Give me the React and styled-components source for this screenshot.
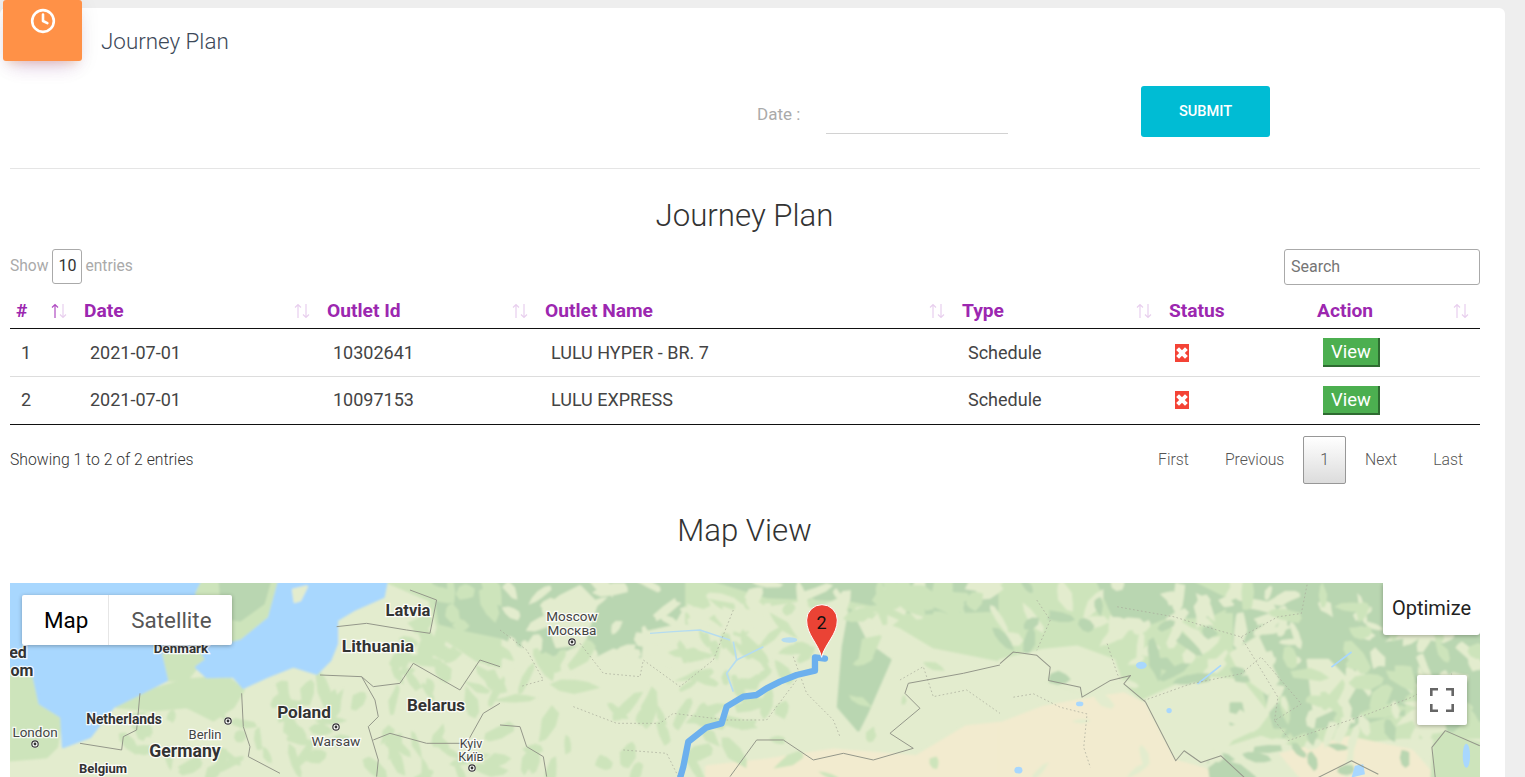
import React from "react";
import styled, { createGlobalStyle } from "styled-components";
import { Clock } from "lucide-react";

const Global = createGlobalStyle`
  html, body { margin: 0; padding: 0; height: 100%; overflow: hidden; background: #eeeeee; }
  body { font-family: Roboto, "Liberation Sans", sans-serif; color: #3c4858; }
  * { box-sizing: border-box; }
`;
const Card = styled.main`
  position: relative; width: 1505px; margin-top: 8px; padding: 0 25px 0 10px;
  background: #fff; border-radius: 6px 6px 0 0; height: 769px; overflow: visible;
`;
const IconBadge = styled.div`
  position: absolute; left: 3px; top: -8px; width: 79px; height: 61px; padding-top: 8px;
  display: flex; justify-content: center; align-items: flex-start; color: #fff;
  background: #ff9147; border-radius: 3px;
  box-shadow: 0 12px 20px -10px rgba(156,39,176,.28), 0 4px 20px 0 rgba(0,0,0,.08), 0 7px 8px -5px rgba(255,152,0,.2);
`;
const CardHeader = styled.h4`
  margin: 0; height: 66px; padding-left: 91px; font-size: 22.4px; line-height: 67px; font-weight: 300; color: #3c4858;
`;
const FilterRow = styled.form`
  display: flex; align-items: flex-start; height: 51px; margin-top: 12px; padding-left: 747px;
`;
const DateLabel = styled.label`
  width: 69px; font-size: 17px; line-height: 56px; color: #aaa; flex: none;
`;
const DateInput = styled.div`
  width: 182px; height: 48px; border-bottom: 1px solid #d2d2d2; flex: none;
`;
const SubmitButton = styled.button`
  width: 129px; margin-left: 133px; height: 51px; padding: 0 0 2px; border: 0; border-radius: 3px; flex: none;
  background: #00bcd4; color: #fff; font: 500 14.6px Roboto, sans-serif; text-transform: uppercase;
`;
const Divider = styled.hr`
  margin: 31px 0 0; border: 0; height: 1px; background: #e5e5e5;
`;
const Heading = styled.h2`
  margin: ${p => p.$top}px 0 0; padding-right: 1px; text-align: center; font-size: 31.2px; line-height: 40px; font-weight: 300; color: #333;
`;
const Tools = styled.div`
  display: flex; justify-content: space-between; align-items: flex-start; margin-top: 13px; height: 36px;
`;
const ShowLabel = styled.div`
  display: flex; align-items: flex-start; gap: 4px; font-size: 15.6px; color: #aaa; line-height: 34px;
`;
const LengthBox = styled.span`
  width: 30px; height: 35px; margin-right: -1px; padding-bottom: 2px; border: 1px solid #aaa; border-radius: 3px; color: #333; font-size: 16px;
  display: flex; align-items: center; justify-content: center;
`;
const SearchBox = styled.div`
  width: 196px; height: 36px; border: 1px solid #aaa; border-radius: 3px; padding-left: 6px;
  font-size: 16px; line-height: 34px; color: #757575;
`;
const Table = styled.table`
  width: 1470px; margin-top: 7px; border-collapse: collapse; table-layout: fixed;
`;
const HeadCell = styled.th`
  height: 36px; padding: 2px 0 0 6px; border-bottom: 1px solid #111; text-align: left;
  color: #9c27b0; font-size: 19.2px; font-weight: 700;
`;
const HeadInner = styled.div`
  display: flex; justify-content: space-between; align-items: center; padding-right: 10px;
`;
const Cell = styled.td`
  height: 48px; padding: 0 0 0 ${p => p.$pad || 12}px; border-bottom: 1px solid ${p => (p.$last ? "#111" : "#ddd")};
  font-size: 18px; color: #444; font-weight: 400;
`;
const CellText = styled.span`
  display: block; padding: ${p => (p.$first ? "1px 0 0" : "0 0 2px")};
`;
const StatusMark = styled.span`
  display: block; padding-top: ${p => (p.$first ? 2 : 0)}px;
`;
const ViewButton = styled.span`
  display: flex; align-items: center; justify-content: center; width: 57px; height: 29px; padding-left: 1px;
  background: #4caf50; color: #fff; font-size: 18.4px; border-right: 2px solid #2e6b31; border-bottom: 2px solid #2e6b31;
`;
const TableFooter = styled.div`
  display: flex; justify-content: space-between; align-items: center; margin-top: 11px; height: 48px;
`;
const Info = styled.div`
  font-size: 15.75px; font-weight: 300; color: #333;
`;
const Pager = styled.nav`
  display: flex; gap: 2px;
`;
const PageLink = styled.span`
  height: 48px; padding: 0 16px; border: 1px solid ${p => (p.$active ? "#979797" : "transparent")}; border-radius: 2px;
  font-size: 15.75px; font-weight: 300; line-height: 46px; color: #555;
  background: ${p => (p.$active ? "linear-gradient(to bottom,#fff 0%,#dcdcdc 100%)" : "none")};
`;
const MapBox = styled.section`
  position: relative; width: 1470px; height: 194px; margin-top: 32px; overflow: hidden; background: #e3ecce;
`;
const MapArt = styled.svg`
  display: block; width: 1470px; height: 194px;
`;
const MapType = styled.div`
  position: absolute; left: 12px; top: 12px; height: 50px; display: flex; background: #fff; border-radius: 2px;
  box-shadow: 0 1px 4px rgba(0,0,0,.3); font-size: 22.4px; line-height: 50px;
`;
const MapTypeOption = styled.span`
  padding: 0 ${p => p.$r}px 0 22px; color: ${p => (p.$on ? "#000" : "#565656")};
  border-right: ${p => (p.$on ? "1px solid #e6e6e6" : "0")};
`;
const OptimizeBtn = styled.div`
  position: absolute; right: 0; top: 0; width: 97px; height: 52px; background: #fff; border-radius: 0 0 3px 3px;
  box-shadow: 0 1px 4px rgba(0,0,0,.3); font-size: 20px; line-height: 50px; text-align: center; color: #222;
`;
const FullBtn = styled.div`
  position: absolute; left: 1407px; top: 92px; width: 50px; height: 50px; background: #fff; border-radius: 2px;
  box-shadow: 0 1px 4px rgba(0,0,0,.3); display: flex; align-items: center; justify-content: center;
`;

const Sort = ({ on }) => (
  <svg width="18" height="18" viewBox="0 0 18 18" fill="none" strokeWidth="1.2" aria-hidden="true">
    <path d="M5 16V2.5M2 5.5 5 2.5l3 3" stroke={on ? "#b04cc2" : "#e8cfee"} />
    <path d="M13 2v13.5M10 12.5l3 3 3-3" stroke="#e8cfee" />
  </svg>
);
const Cross = () => (
  <svg width="14" height="18" viewBox="0 0 14 18" aria-hidden="true" style={{ display: "block" }}>
    <rect width="14" height="18" fill="#f44336" />
    <path d="M2.6 4.6l8.8 8.8M11.4 4.6l-8.8 8.8" stroke="#fff" strokeWidth="4" />
  </svg>
);

const WATER = "#a8d7fe", MID = "#cde4bb", DARK = "#b9d6b1", SAND = "#f2ebcf", LIGHT = "#e3ecce";
const P = ({ f, d }) => <polygon fill={f} stroke={f} strokeWidth="9" strokeLinejoin="round" points={d} />;
const Line = ({ d, dash }) => (
  <polyline points={d} fill="none" stroke={dash ? "#a9ab9b" : "#94978a"} strokeWidth={dash ? 2.2 : 3}
    strokeDasharray={dash ? "5 7" : undefined} strokeLinejoin="round" />
);
const MapLabel = styled.text`
  font-family: Roboto, sans-serif; font-size: ${p => p.$s}px; font-weight: ${p => (p.$b ? 700 : 400)};
  fill: ${p => (p.$b ? "#333" : "#444")}; text-anchor: middle; paint-order: stroke; stroke: #fff; stroke-width: 2.6px; stroke-opacity: .85;
`;
const City = ({ x, y }) => (
  <g><circle cx={x} cy={y} r="4" fill="#fff" /><circle cx={x} cy={y} r="3.2" fill="none" stroke="#333" strokeWidth="1.2" /><circle cx={x} cy={y} r="1.4" fill="#333" /></g>
);

// Scattered vegetation fragments that give the map tile its mottled look: [x0, y0, x1, y1, colour, count, size] in page pixels.
const patchZones = [
  [395, 583, 500, 690, MID, 26, 14], [390, 670, 500, 777, MID, 20, 12], [245, 690, 400, 777, MID, 26, 13],
  [120, 690, 250, 777, MID, 20, 10], [500, 583, 680, 690, LIGHT, 32, 12], [500, 650, 800, 777, MID, 46, 13],
  [680, 600, 820, 690, MID, 26, 12], [690, 583, 1000, 625, LIGHT, 34, 12], [860, 583, 1000, 620, MID, 20, 14],
  [1000, 583, 1240, 665, LIGHT, 34, 13], [1000, 583, 1240, 680, DARK, 22, 12], [1240, 583, 1480, 700, LIGHT, 42, 12],
  [1240, 583, 1480, 720, MID, 36, 14], [1200, 700, 1480, 777, LIGHT, 24, 12], [1240, 720, 1480, 777, DARK, 12, 11],
  [830, 640, 1000, 777, MID, 8, 8], [1000, 680, 1150, 777, LIGHT, 6, 9],
];
function buildPatches() {
  let seed = 12345;
  const rnd = () => { seed = (seed * 16807) % 2147483647; return seed / 2147483647; };
  const out = [];
  patchZones.forEach(([x0, y0, x1, y1, f, n, s]) => {
    for (let i = 0; i < n; i++) {
      const cx = x0 + rnd() * (x1 - x0), cy = y0 + rnd() * (y1 - y0);
      const a = rnd() * Math.PI, long = s * (0.6 + rnd()), short = s * (0.25 + rnd() * 0.35);
      const pts = [];
      for (let k = 0; k < 8; k++) {
        const t = (k / 8) * Math.PI * 2, w = 0.7 + rnd() * 0.6;
        const px = Math.cos(t) * long * w, py = Math.sin(t) * short * w;
        pts.push(`${(cx + px * Math.cos(a) - py * Math.sin(a)).toFixed(1)},${(cy + px * Math.sin(a) + py * Math.cos(a)).toFixed(1)}`);
      }
      out.push({ f, d: pts.join(" ") });
    }
  });
  return out;
}
const patches = buildPatches();

const labels = [
  ["Latvia", 408, 616, 16.5, 1], ["Lithuania", 378, 652, 17.4, 1], ["Denmark", 181, 653, 13.4, 1],
  ["ed", 18, 658, 16, 1], ["om", 22, 676, 16, 1], ["Netherlands", 124, 724, 13.8, 1],
  ["Berlin", 205, 739, 13, 0], ["Germany", 185, 757, 17.6, 1], ["Poland", 304, 718, 17.2, 1],
  ["Warsaw", 336, 746, 13.7, 0], ["Belarus", 436, 711, 17, 1], ["Kyiv", 471, 748, 12.5, 0],
  ["Київ", 471, 761, 12.5, 0], ["London", 35, 737, 13.5, 0], ["Belgium", 103, 773, 13, 1],
  ["Moscow", 572, 621, 13.5, 0], ["Москва", 572, 635, 13.5, 0],
];

export default function App() {
  const rows = [[1, "10302641", "LULU HYPER - BR. 7"], [2, "10097153", "LULU EXPRESS"]];
  return (
    <>
      <Global />
      <Card>
        <IconBadge><Clock size={26} strokeWidth={2.4} /></IconBadge>
        <CardHeader>Journey Plan</CardHeader>
        <FilterRow>
          <DateLabel>Date :</DateLabel>
          <DateInput />
          <SubmitButton type="button">Submit</SubmitButton>
        </FilterRow>
        <Divider />
        <Heading $top={27}>Journey Plan</Heading>
        <Tools>
          <ShowLabel>Show <LengthBox>10</LengthBox> entries</ShowLabel>
          <SearchBox>Search</SearchBox>
        </Tools>
        <Table>
          <colgroup>
            {[68, 243, 218, 417, 207, 148, 169].map((w, i) => <col key={i} width={w} />)}
          </colgroup>
          <thead>
            <tr>
              <HeadCell><HeadInner>#<Sort on /></HeadInner></HeadCell>
              {["Date", "Outlet Id", "Outlet Name", "Type"].map(t => (
                <HeadCell key={t}><HeadInner>{t}<Sort /></HeadInner></HeadCell>
              ))}
              <HeadCell>Status</HeadCell>
              <HeadCell><HeadInner>Action<Sort /></HeadInner></HeadCell>
            </tr>
          </thead>
          <tbody>
            {rows.map(([n, id, name], i) => {
              const last = i === rows.length - 1;
              const first = i === 0;
              return (
                <tr key={n}>
                  <Cell $last={last} $pad={11}><CellText $first={first}>{n}</CellText></Cell>
                  <Cell $last={last}><CellText $first={first}>2021-07-01</CellText></Cell>
                  <Cell $last={last}><CellText $first={first}>{id}</CellText></Cell>
                  <Cell $last={last}><CellText $first={first}>{name}</CellText></Cell>
                  <Cell $last={last}><CellText $first={first}>Schedule</CellText></Cell>
                  <Cell $last={last}><StatusMark $first={first}><Cross /></StatusMark></Cell>
                  <Cell $last={last}><ViewButton>View</ViewButton></Cell>
                </tr>
              );
            })}
          </tbody>
        </Table>
        <TableFooter>
          <Info>Showing 1 to 2 of 2 entries</Info>
          <Pager>
            <PageLink>First</PageLink>
            <PageLink>Previous</PageLink>
            <PageLink $active>1</PageLink>
            <PageLink>Next</PageLink>
            <PageLink>Last</PageLink>
          </Pager>
        </TableFooter>
        <Heading $top={27}>Map View</Heading>
        <MapBox>
          <MapArt viewBox="10 583 1470 194" aria-label="Map">
            <defs><filter id="soft" x="-2%" y="-2%" width="104%" height="104%"><feGaussianBlur stdDeviation="0.9" /></filter></defs>
            <rect x="0" y="580" width="1525" height="200" fill={LIGHT} />
            <g filter="url(#soft)">
              <g transform="translate(0 580) scale(.3333)">
                <P f={MID} d="1150,0 1500,0 1500,260 1430,240 1310,160 1290,60" />
                <P f={DARK} d="1300,0 1500,0 1500,170 1400,150 1320,130" />
                <P f={LIGHT} d="1160,110 1290,90 1310,160 1210,250 1120,320 1085,290 1080,240 1010,190 1020,140" />
                <P f={MID} d="480,215 620,205 620,240 590,262 560,300 500,300" />
                <P f={MID} d="30,280 100,280 120,370 185,410 170,500 140,530 30,540" />
                <P f={MID} d="420,340 560,300 680,290 730,330 700,380 640,420 560,380 460,390 350,380" />
              </g>
              <g transform="translate(500 580) scale(.3333)">
                <P f={DARK} d="0,0 560,0 560,60 520,130 430,150 420,230 340,200 280,230 240,190 150,230 70,200 0,170" />
                <P f={MID} d="560,0 1500,0 1500,240 1300,200 1200,140 1050,90 900,60 700,90 560,130" />
                <P f={DARK} d="640,0 1500,0 1500,90 1250,100 1050,60 800,50" />
                <P f={LIGHT} d="130,90 180,50 240,20 290,70 250,190 170,200" />
                <P f={DARK} d="1050,90 1100,190 1170,240 1100,400 1075,450 1015,380 1030,200" />
                <P f={MID} d="1090,180 1140,170 1110,240 1080,240" />
                <P f={SAND} d="620,560 800,540 1000,510 1250,530 1400,440 1500,430 1500,590 620,590" />
              </g>
              <g transform="translate(1000 580) scale(.3348)">
                <P f={MID} d="0,0 1440,0 1440,470 1200,470 900,500 780,460 620,510 520,540 430,360 360,300 250,340 130,300 0,240" />
                <P f={DARK} d="290,0 560,0 700,70 620,110 500,110 420,140 340,110" />
                <P f={DARK} d="700,0 1440,0 1440,420 1180,400 1040,440 820,440 780,300 700,200" />
                <P f={LIGHT} d="0,240 130,210 230,200 340,240 360,300 250,340 130,300 0,300" />
                <P f={LIGHT} d="430,360 580,290 720,300 800,400 770,440 620,510 520,540" />
                <P f={DARK} d="690,370 720,370 730,420 690,430" />
                <P f={LIGHT} d="690,220 770,170 830,300 800,340 720,280" />
                <P f={LIGHT} d="920,240 980,240 1060,320 1030,370 940,410" />
                <P f={SAND} d="0,430 130,380 240,360 370,340 430,370 520,540 700,590 0,590" />
                <P f={SAND} d="840,520 1040,470 1230,510 1300,590 900,590" />
                <P f={DARK} d="620,510 680,525 760,590 630,590" />
                <P f={MID} d="1300,460 1440,490 1440,590 1290,590" />
              </g>
              {patches.map((b, i) => <polygon key={i} fill={b.f} points={b.d} />)}
              <g transform="translate(0 580) scale(.3333)">
                <P f={WATER} d="0,0 1160,0 1150,50 1060,90 1010,120 1010,190 990,240 950,280 880,258 800,290 730,322 700,288 620,290 590,262 620,240 600,205 480,215 500,300 420,340 340,380 270,470 190,500 185,410 120,370 100,280 30,280 0,260" />
                <P f={MID} d="610,0 830,0 800,110 720,175 660,190 600,120 590,40" />
                <P f={DARK} d="660,0 810,0 790,70 720,120 670,110" />
                <P f={LIGHT} d="880,30 920,20 900,60 885,65" />
              </g>
            </g>
            <g transform="translate(0 580) scale(.3333)">
              <Line d="1085,290 1125,360 1135,410 1105,440 1135,540 1130,590" />
              <Line d="960,285 1085,290 1120,320 1200,310 1240,250" />
              <Line d="1010,140 1100,130 1220,150 1290,160 1310,60 1230,30" />
              <Line d="1240,250 1380,330 1440,240 1500,260" />
              <Line d="1120,480 1170,460 1280,490 1400,490 1450,400 1500,370" />
              <Line d="725,340 730,440 750,500 745,530 840,580" />
              <Line d="420,340 410,450 370,470 365,510 240,490" />
            </g>
            <g transform="translate(500 580) scale(.3333)">
              <polyline points="700,185 710,240 680,280 700,335" fill="none" stroke="#b5dcf0" strokeWidth="5" />
              <polyline points="710,240 790,200" fill="none" stroke="#b5dcf0" strokeWidth="5" />
              <polyline points="450,160 520,155 600,150 690,180" fill="none" stroke="#b5dcf0" strokeWidth="4" />
              <ellipse cx="868" cy="180" rx="24" ry="8" fill="#b5dcf0" />
              <Line dash d="0,150 80,210 130,300 60,320" />
              <Line dash d="240,190 310,280 420,290 430,240 540,320 640,240 700,90" />
              <Line dash d="220,380 350,430 480,430 520,400 680,420 800,420 890,300" />
              <Line dash d="880,230 920,340 1000,420 1020,470" />
              <Line dash d="1200,300 1270,260 1300,350 1400,330 1500,400" />
              <Line dash d="370,510 500,520 540,600" />
              <Line d="0,435 60,440 80,500 130,530 140,590" />
              <Line d="690,590 770,480 850,480 940,540 1030,520 1120,540 1240,505 1170,460 1260,385 1215,340 1225,310 1390,280 1500,255" />
              <polyline points="975,236 945,232 945,272 890,285 840,305 800,325 770,345 730,350 680,380 665,430 620,442 565,485 550,560 540,595"
                fill="none" stroke="#6cb0ee" strokeWidth="19" strokeLinejoin="round" strokeLinecap="round" />
              <path d="M965 232C955 190 920 165 920 120a46 46 0 0 1 92 0C1012 165 975 190 965 232Z" fill="#ea4335" stroke="#fff" strokeWidth="3" />
              <text x="965" y="148" fontFamily="Roboto, sans-serif" fontSize="54" textAnchor="middle" fill="#111">2</text>
            </g>
            <g transform="translate(1000 580) scale(.3348)">
              <ellipse cx="1393" cy="525" rx="11" ry="36" fill="#a8d7fe" />
              <polygon points="1060,555 1085,550 1090,580 1050,590" fill="#a8d7fe" />
              <polyline points="590,310 660,255" fill="none" stroke="#a8d7fe" strokeWidth="5" />
              <polyline points="990,260 1050,215" fill="none" stroke="#a8d7fe" strokeWidth="5" />
              <ellipse cx="422" cy="255" rx="16" ry="11" fill="#a8d7fe" />
              <ellipse cx="505" cy="390" rx="8" ry="8" fill="#a8d7fe" />
              <ellipse cx="55" cy="568" rx="12" ry="10" fill="#a8d7fe" />
              <ellipse cx="238" cy="370" rx="11" ry="7" fill="#a8d7fe" />
              <Line dash d="40,350 100,340 180,380 260,400 250,500 270,560" />
              <Line dash d="320,190 350,280 360,300" />
              <Line dash d="430,360 570,310 720,280 780,230 900,370 820,420 860,470" />
              <Line dash d="350,80 520,110 650,150 720,170 830,110 900,100 920,0" />
              <Line dash d="720,170 830,350 820,420" />
              <Line dash d="110,60 150,120 110,210" />
              <Line dash d="860,480 1100,400 1230,350 1350,280" />
              <Line d="0,250 40,215 110,225 150,260 145,300 240,320 245,350 330,300 390,285 370,310 435,365 525,540 550,510 600,545 660,525 730,590" />
              <Line d="950,590 1050,540 1130,580" />
              <Line d="1300,590 1290,500 1330,450 1433,495" />
            </g>
            {labels.map(([t, x, y, s, b]) => <MapLabel key={t} x={x} y={y} $s={s} $b={b}>{t}</MapLabel>)}
            <City x={228} y={721} /><City x={336} y={727} /><City x={35} y={744} /><City x={472} y={768} /><City x={572} y={642} />
          </MapArt>
          <MapType>
            <MapTypeOption $on $r={20}>Map</MapTypeOption>
            <MapTypeOption $r={20}>Satellite</MapTypeOption>
          </MapType>
          <OptimizeBtn>Optimize</OptimizeBtn>
          <FullBtn>
            <svg width="24" height="24" viewBox="0 0 24 24" fill="none" stroke="#666" strokeWidth="3.2" aria-hidden="true">
              <path d="M1 8V1h7M16 1h7v7M23 16v7h-7M8 23H1v-7" />
            </svg>
          </FullBtn>
        </MapBox>
      </Card>
    </>
  );
}
